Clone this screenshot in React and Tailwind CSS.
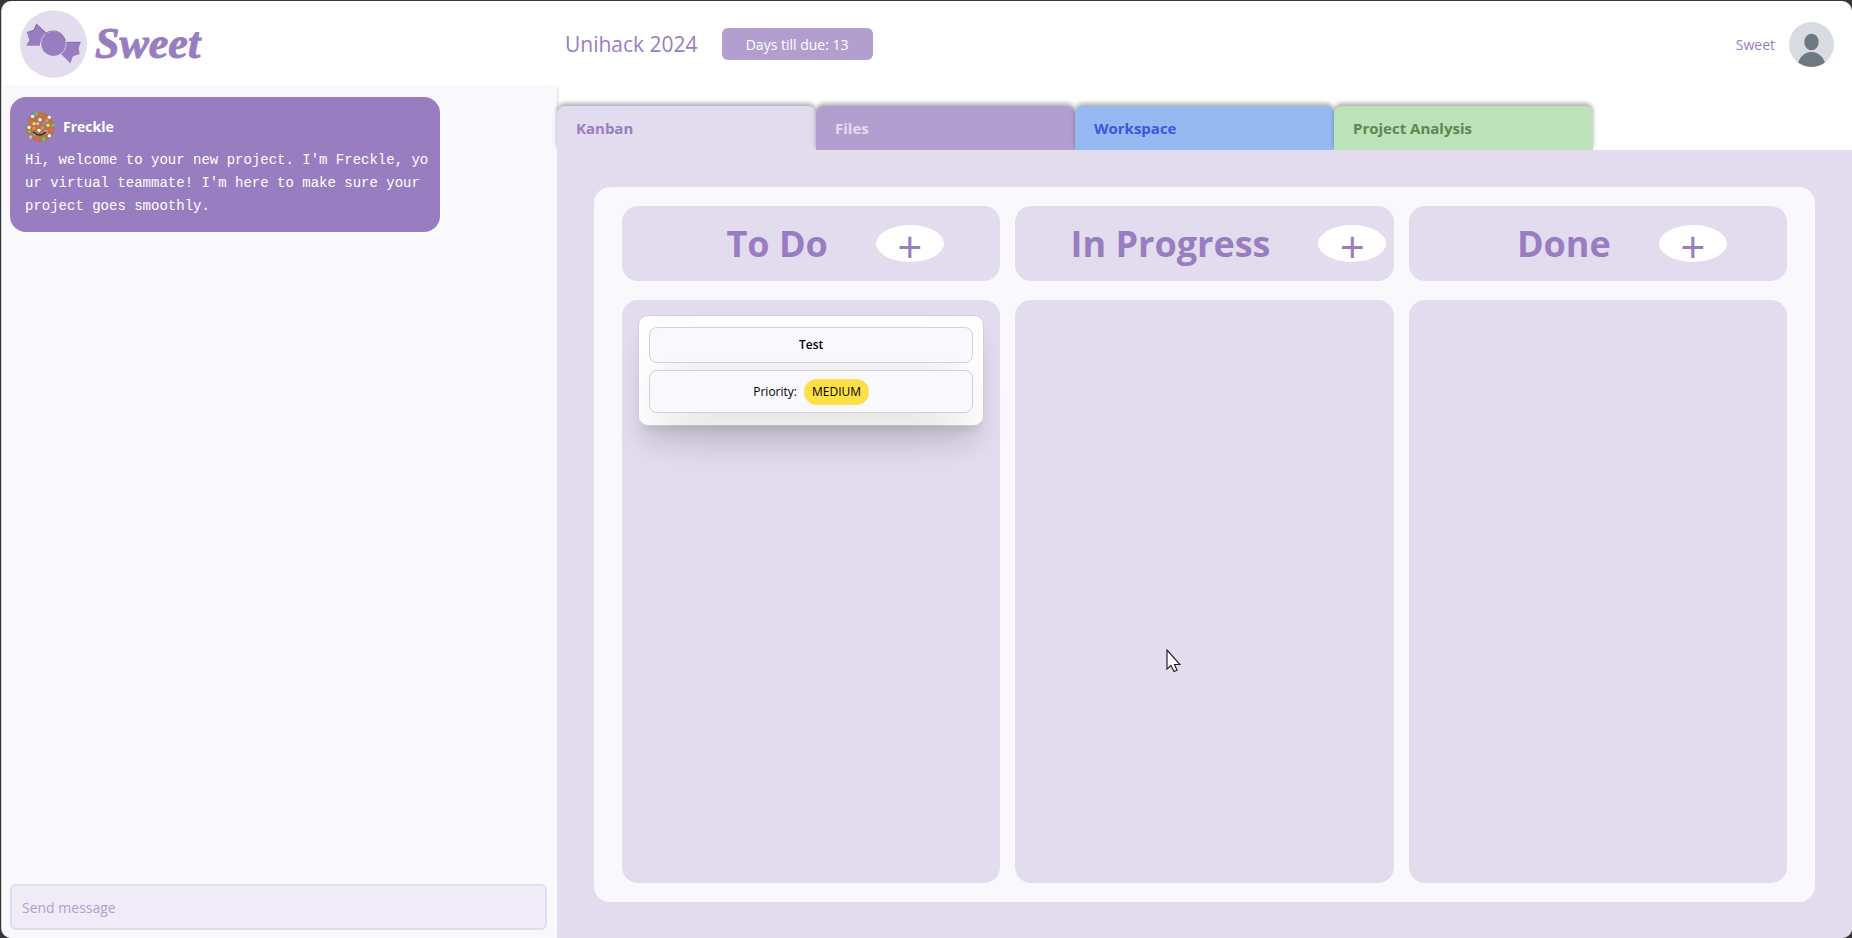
import React from "react";

const tabs = [
  { name: "Kanban", style: "bg-[#e3dcee] text-[#997dc1]" },
  { name: "Files", style: "bg-[#b29fd0] text-[#e3dcee]" },
  { name: "Workspace", style: "bg-[#96b9f2] text-[#4551e2]" },
  { name: "Project Analysis", style: "bg-[#bbe2b9] text-[#5f8650]" },
];

const columns = [
  { title: "To Do", tasks: [{ name: "Test", priority: "MEDIUM" }] },
  { title: "In Progress", tasks: [] },
  { title: "Done", tasks: [] },
];

const sprinkles = [
  [23, 13, "#fff"], [34, 6, "#5fd068"], [48, 10, "#f0605a"], [73, 16, "#fff"],
  [45, 23, "#fff"], [66, 26, "#f08c3c"], [17, 30, "#f0605a"], [5, 35, "#5b9cf0"],
  [27, 35, "#f4dc70"], [38, 35, "#e8a8e0"], [58, 34, "#5b9cf0"], [69, 40, "#f4dc70"],
  [84, 40, "#5fd068"], [12, 46, "#fff"], [27, 49, "#f08c3c"], [52, 48, "#f08c3c"],
  [79, 53, "#f0605a"], [13, 59, "#5fd068"], [42, 55, "#fff"], [63, 59, "#e8a8e0"],
  [29, 66, "#4fc4c4"], [17, 75, "#e8a8e0"], [37, 79, "#f0605a"], [56, 81, "#5fd068"],
  [73, 71, "#fff"],
];

function CandyLogo() {
  return (
    <svg viewBox="0 0 202 204" className="h-[68px] w-[67px]" aria-hidden="true">
      <ellipse cx="101" cy="102" rx="101" ry="102" fill="#e3dcee" />
      <g fill="#997dc1">
        <path d="M50 42 L79 69 L62 97 L59 107 L19 107 L28 90 L21 67 L42 60 Z" />
        <path d="M137 97 L183 97 L177 114 L180 132 L159 140 L152 161 L122 131 Z" />
      </g>
      <path d="M50 42 L79 69 M21 67 L42 60 L50 42 M137 97 L183 97" stroke="#5f5470" strokeWidth="2" fill="none" />
      <circle cx="101" cy="101" r="39" fill="#e3dcee" />
      <path d="M79 69 L66 88 L80 90 L90 72 Z M137 97 L122 131 L110 125 L125 90 Z" fill="#997dc1" />
      <circle cx="101" cy="101" r="37" fill="#997dc1" />
      <path d="M79 69 A37 37 0 0 1 136 92" stroke="#5f5470" strokeWidth="2" fill="none" />
    </svg>
  );
}

function FreckleAvatar() {
  return (
    <svg viewBox="0 0 90 90" className="size-[30px]" aria-hidden="true">
      <circle cx="45" cy="45" r="44" fill="#b0774f" />
      {sprinkles.map(([x, y, color]) => (
        <circle key={`${x}-${y}`} cx={x} cy={y} r="5" fill={color} />
      ))}
      <path d="M25 60 Q44 78 63 60" stroke="#2f2a2a" strokeWidth="4" fill="none" strokeLinecap="round" />
    </svg>
  );
}

function UserAvatar() {
  return (
    <svg viewBox="0 0 135 135" className="size-[45px]" aria-hidden="true">
      <clipPath id="avatar-clip">
        <circle cx="67.500" cy="67.500" r="67.500" />
      </clipPath>
      <g clipPath="url(#avatar-clip)">
        <rect width="135" height="135" fill="#d8dbe0" />
        <ellipse cx="67.500" cy="60" rx="21.500" ry="25" fill="#6d7880" />
        <path d="M27 135 V123 C34 102 48 90 67.500 90 S101 102 108 123 V135 Z" fill="#6d7880" />
      </g>
    </svg>
  );
}

function TaskCard({ task }) {
  return (
    <article className="flex flex-col gap-[7px] rounded-[10px] border border-[#d3d0dc] bg-white px-2.5 pb-3 pt-[11px] text-[12px] leading-4 text-black shadow-xl">
      <h3 className="flex h-9 items-center justify-center rounded-lg border border-[#d3d0dc] bg-[#f9f8fd] font-semibold shadow-2xl">
        {task.name}
      </h3>
      <div className="flex h-[43px] items-center justify-center gap-[7px] rounded-lg border border-[#d3d0dc] bg-[#f9f8fd] shadow-2xl">
        <span>Priority:</span>
        <span className="rounded-full bg-[#fddf47] px-2 py-[5px]">{task.priority}</span>
      </div>
    </article>
  );
}

function Column({ column }) {
  return (
    <section className="flex flex-col gap-[19px]">
      <header className="flex h-[75px] items-center justify-center rounded-2xl bg-[#e3dcee] text-[#997dc1]">
        <h2 className="mx-12 whitespace-nowrap text-[36px] font-bold leading-10">{column.title}</h2>
        <button
          type="button"
          aria-label={`Add task to ${column.title}`}
          className="flex h-[37px] w-[68px] shrink-0 items-center justify-center rounded-[50%] bg-white pt-1 text-[44px] leading-none"
        >
          +
        </button>
      </header>
      <div className="flex-1 rounded-2xl bg-[#e3dcee] px-4 pt-[15px]">
        {column.tasks.map((task) => (
          <TaskCard key={task.name} task={task} />
        ))}
      </div>
    </section>
  );
}

export default function App() {
  return (
    <div className="flex min-h-screen bg-[#353535] pl-px pt-px font-['Open_Sans','Noto_Sans',sans-serif]">
      <div className="flex flex-1 flex-col overflow-hidden rounded-[10px] border-l border-[#d0d0d0] bg-white">
        <header className="flex h-[86px] items-center">
          <div className="flex w-[30%] items-center gap-2 pl-[18px]">
            <CandyLogo />
            <span className="font-['Liberation_Serif',serif] text-[44px] font-bold italic leading-none text-[#997dc1] [-webkit-text-stroke:1px_#997dc1]">
              Sweet
            </span>
          </div>
          <div className="flex flex-1 items-center justify-between pl-2 pr-[18px] text-[#997dc1]">
            <div className="flex items-center gap-6">
              <h1 className="text-[21px] leading-8">Unihack 2024</h1>
              <p className="flex h-8 w-[151px] items-center justify-center rounded-md bg-[#b29fd0] text-[14px] text-white">
                Days till due: 13
              </p>
            </div>
            <div className="flex items-center gap-3.5 text-[14px]">
              <span>Sweet</span>
              <UserAvatar />
            </div>
          </div>
        </header>

        <div className="flex flex-1">
          <aside className="flex w-[30%] flex-col justify-between bg-[#f9f8fd] pb-2 pl-2 pr-2.5 pt-2.5 shadow-[1px_0_2px_rgba(0,0,0,0.15)]">
            <div className="h-[135px] w-[430px] rounded-2xl bg-[#997dc1] pl-[15px] pr-2 pt-[15px] text-white">
              <div className="flex items-center gap-2">
                <FreckleAvatar />
                <strong className="text-[14px] leading-5">Freckle</strong>
              </div>
              <p className="mt-[7px] break-all font-['Liberation_Mono',monospace] text-[14px] leading-[23px]">
                Hi, welcome to your new project. I'm Freckle, your virtual teammate! I'm here to make sure your project goes smoothly.
              </p>
            </div>
            <input
              type="text"
              aria-label="Send message"
              placeholder="Send message"
              className="h-[46px] w-full rounded-md border-2 border-[#e3dcee] bg-[#f0ecf7] px-2.5 text-[14px] text-[#997dc1] outline-none placeholder:text-[#b29fd0]"
            />
          </aside>

          <main className="flex flex-1 flex-col">
            <nav className="flex pt-[19px]">
              {tabs.map((tab) => (
                <button
                  key={tab.name}
                  type="button"
                  className={`h-11 w-1/5 rounded-t-lg px-[19px] text-left text-[15px] font-bold shadow-[0_-3px_4px_rgba(0,0,0,0.3)] ${tab.style}`}
                >
                  {tab.name}
                </button>
              ))}
            </nav>
            <div className="relative flex flex-1 bg-[#e3dcee] px-[37px] pb-9 pt-[37px]">
              <div className="grid flex-1 grid-cols-3 gap-[15px] rounded-2xl bg-[#f9f8fd] px-7 py-[19px]">
                {columns.map((column) => (
                  <Column key={column.title} column={column} />
                ))}
              </div>
              <svg
                viewBox="0 0 15 24"
                className="absolute left-[47%] top-[499px] h-6 w-[15px]"
                aria-hidden="true"
              >
                <path
                  d="M1 1 V20 L5 16.500 L8 22.500 L11 21.200 L8.500 15.500 H14 Z"
                  fill="#fff"
                  stroke="#222"
                  strokeWidth="1.200"
                />
              </svg>
            </div>
          </main>
        </div>
      </div>
    </div>
  );
}
